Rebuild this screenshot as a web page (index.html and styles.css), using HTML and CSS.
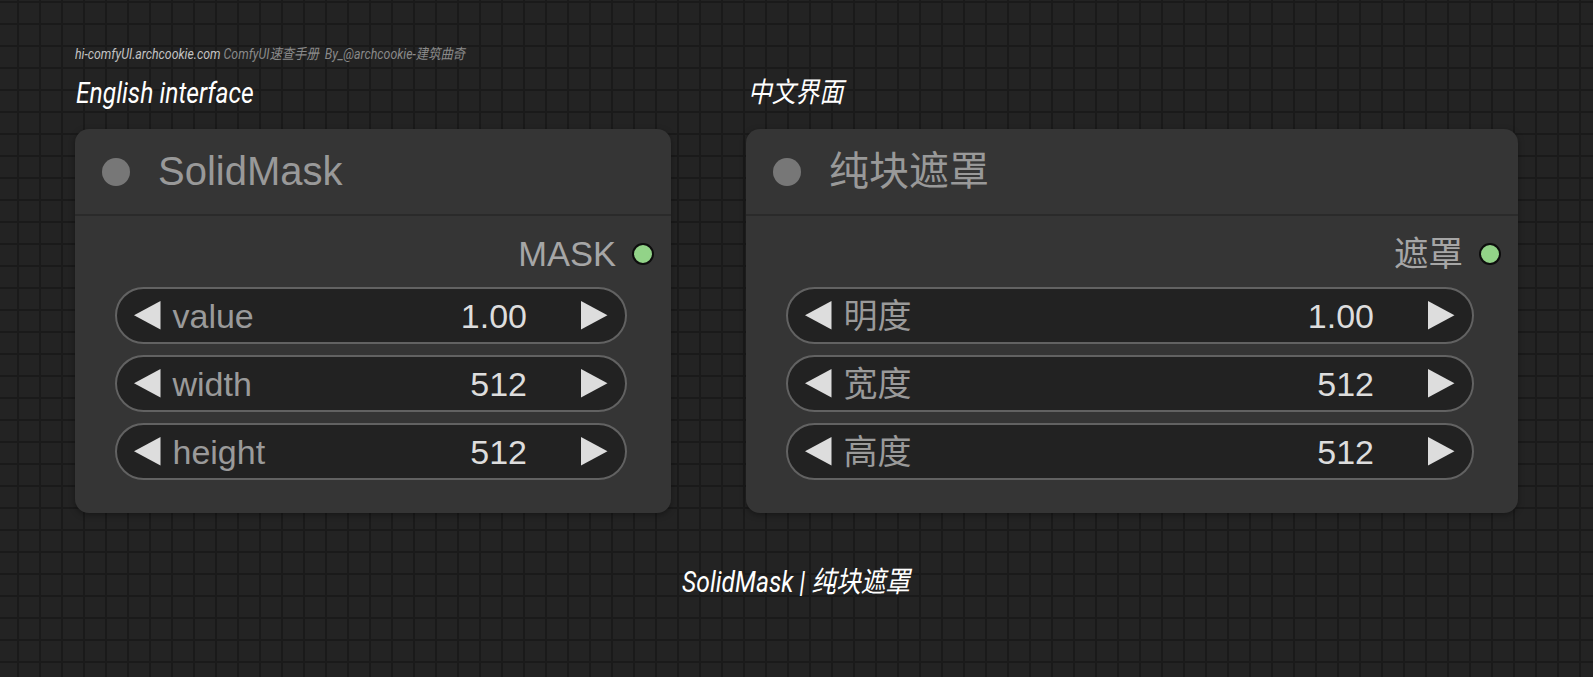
FILE: index.html
```html
<!DOCTYPE html>
<html lang="zh">
<head>
<meta charset="utf-8">
<title>SolidMask | 纯块遮罩</title>
<link rel="stylesheet" href="styles.css">
</head>
<body>
<div class="page">
  <div class="credit"><span class="cond"><span class="site">hi-comfyUI.archcookie.com</span> ComfyUI速查手册&nbsp; By_@archcookie-建筑曲奇</span></div>
  <div class="columns">
    <div class="col col-en">
      <div class="label"><span class="cond">English interface</span></div>
      <div class="node">
        <div class="node-title"><span class="title-dot"></span><span class="title-text">SolidMask</span></div>
        <div class="node-body">
          <div class="output"><span class="output-name">MASK</span><span class="slot"></span></div>
          <div class="widget">
            <svg class="arrow" viewBox="0 0 26 28"><polygon points="26,0 26,28 0,14"/></svg>
            <span class="w-label">value</span><span class="w-value">1.00</span>
            <svg class="arrow" viewBox="0 0 26 28"><polygon points="0,0 0,28 26,14"/></svg>
          </div>
          <div class="widget">
            <svg class="arrow" viewBox="0 0 26 28"><polygon points="26,0 26,28 0,14"/></svg>
            <span class="w-label">width</span><span class="w-value">512</span>
            <svg class="arrow" viewBox="0 0 26 28"><polygon points="0,0 0,28 26,14"/></svg>
          </div>
          <div class="widget">
            <svg class="arrow" viewBox="0 0 26 28"><polygon points="26,0 26,28 0,14"/></svg>
            <span class="w-label">height</span><span class="w-value">512</span>
            <svg class="arrow" viewBox="0 0 26 28"><polygon points="0,0 0,28 26,14"/></svg>
          </div>
        </div>
      </div>
    </div>
    <div class="col col-zh">
      <div class="label"><span class="cond">中文界面</span></div>
      <div class="node">
        <div class="node-title"><span class="title-dot"></span><span class="title-text">纯块遮罩</span></div>
        <div class="node-body">
          <div class="output"><span class="output-name">遮罩</span><span class="slot"></span></div>
          <div class="widget">
            <svg class="arrow" viewBox="0 0 26 28"><polygon points="26,0 26,28 0,14"/></svg>
            <span class="w-label">明度</span><span class="w-value">1.00</span>
            <svg class="arrow" viewBox="0 0 26 28"><polygon points="0,0 0,28 26,14"/></svg>
          </div>
          <div class="widget">
            <svg class="arrow" viewBox="0 0 26 28"><polygon points="26,0 26,28 0,14"/></svg>
            <span class="w-label">宽度</span><span class="w-value">512</span>
            <svg class="arrow" viewBox="0 0 26 28"><polygon points="0,0 0,28 26,14"/></svg>
          </div>
          <div class="widget">
            <svg class="arrow" viewBox="0 0 26 28"><polygon points="26,0 26,28 0,14"/></svg>
            <span class="w-label">高度</span><span class="w-value">512</span>
            <svg class="arrow" viewBox="0 0 26 28"><polygon points="0,0 0,28 26,14"/></svg>
          </div>
        </div>
      </div>
    </div>
  </div>
  <div class="caption"><span class="cond cond-center">SolidMask | 纯块遮罩</span></div>
</div>
</body>
</html>
```

FILE: styles.css
```css
html, body {
  margin: 0;
  padding: 0;
}
body {
  width: 1593px;
  height: 677px;
  overflow: hidden;
  background-color: #232323;
  background-image:
    linear-gradient(#1a1a1a 2px, transparent 2px),
    linear-gradient(90deg, #1a1a1a 2px, transparent 2px);
  background-size: 22px 22px;
  background-position: 0 1px, 17px 0;
  font-family: "Liberation Sans", "Noto Sans CJK SC", sans-serif;
}
.page {
  padding-left: 75px;
  width: 1443px;
}
.cond {
  display: inline-block;
  font-family: Roboto, "Noto Sans CJK SC", sans-serif;
  font-style: italic;
  transform: scaleX(0.85);
  transform-origin: left center;
  white-space: nowrap;
}
.cond-center {
  transform-origin: center center;
}
.credit {
  margin-top: 45px;
  height: 18px;
  line-height: 18px;
  font-size: 14.5px;
  color: #8a8a8a;
}
.site {
  color: #c4c4c4;
}
.columns {
  display: flex;
  gap: 75px;
}
.col-en { width: 596px; }
.col-zh { width: 772px; }
.label {
  margin-top: 12px;
  height: 36px;
  line-height: 36px;
  font-size: 29px;
  color: #ffffff;
  padding-left: 1px;
}
.col-zh .label { padding-left: 2px; font-size: 28px; }
.node {
  margin-top: 18px;
  height: 384px;
  box-sizing: border-box;
  background: #353535;
  border-radius: 14px;
  box-shadow: 0 2px 6px rgba(0,0,0,0.35);
}
.node-title {
  height: 85px;
  border-bottom: 2px solid #2a2a2a;
  display: flex;
  align-items: center;
  padding-left: 27px;
  gap: 28px;
}
.title-dot {
  width: 28px;
  height: 28px;
  border-radius: 50%;
  background: #777777;
  flex: none;
}
.title-text {
  font-size: 40px;
  color: #999999;
  line-height: 1;
  margin-top: -2px;
}
.node-body {
  padding: 18px 44px 0 40px;
}
.output {
  height: 40px;
  display: flex;
  align-items: center;
  justify-content: flex-end;
  gap: 16px;
  margin-right: -27px;
  margin-bottom: 13px;
}
.output-name {
  font-size: 34.5px;
  color: #a6a6a6;
  line-height: 1;
}
.slot {
  width: 18px;
  height: 18px;
  border-radius: 50%;
  background: #92d388;
  border: 2.8px solid #0d0d0d;
  flex: none;
}
.widget {
  height: 57px;
  box-sizing: border-box;
  border: 2px solid #626262;
  border-radius: 29px;
  background: #222222;
  display: flex;
  align-items: center;
  padding: 0 17.5px 0 17px;
  margin-bottom: 11px;
}
.arrow {
  width: 26.5px;
  height: 28.5px;
  fill: #dddddd;
  flex: none;
}
.w-label {
  margin-left: 12px;
  font-size: 34px;
  color: #9a9a9a;
  line-height: 1;
}
.w-value {
  margin-left: auto;
  margin-right: 54px;
  font-size: 34px;
  color: #dddddd;
  line-height: 1;
}
.caption {
  margin-top: 51px;
  height: 36px;
  line-height: 36px;
  font-size: 29px;
  color: #ffffff;
  text-align: center;
}
```
